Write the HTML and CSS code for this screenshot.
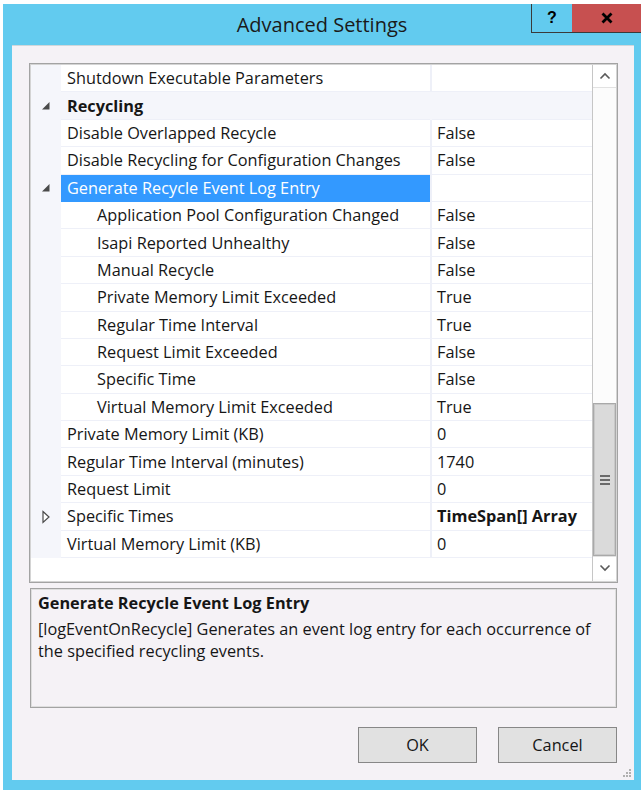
FILE: index.html
```html
<!DOCTYPE html>
<html>
<head>
<meta charset="utf-8">
<title>Advanced Settings</title>
<link rel="stylesheet" href="styles.css">
</head>
<body>
<div class="window">
  <div class="titlebar">
    <div></div>
    <div class="title">Advanced Settings</div>
    <div class="caption">
      <div class="cbtn help">?</div>
      <div class="cbtn close"><svg width="12" height="12" viewBox="0 0 12 12"><path d="M1.5 1.5 L10.5 10.5 M10.5 1.5 L1.5 10.5" stroke="#000" stroke-width="2.8" fill="none"/></svg></div>
    </div>
  </div>
  <div class="client">
    <div class="grid">
      <div class="rows">
        <div class="row"><div class="gut"></div><div class="name">Shutdown Executable Parameters</div><div class="sep"></div><div class="val"></div></div>
        <div class="row cat"><div class="gut"><svg width="10" height="10" viewBox="0 0 10 10"><polygon points="8.5,1 8.5,8.5 1,8.5" fill="#4a4a4a"/></svg></div><div class="name">Recycling</div><div class="sep"></div><div class="val"></div></div>
        <div class="row"><div class="gut"></div><div class="name">Disable Overlapped Recycle</div><div class="sep"></div><div class="val">False</div></div>
        <div class="row"><div class="gut"></div><div class="name">Disable Recycling for Configuration Changes</div><div class="sep"></div><div class="val">False</div></div>
        <div class="row sel"><div class="gut"><svg width="10" height="10" viewBox="0 0 10 10"><polygon points="8.5,1 8.5,8.5 1,8.5" fill="#4a4a4a"/></svg></div><div class="name">Generate Recycle Event Log Entry</div><div class="sep"></div><div class="val"></div></div>
        <div class="row sub"><div class="gut"></div><div class="name">Application Pool Configuration Changed</div><div class="sep"></div><div class="val">False</div></div>
        <div class="row sub"><div class="gut"></div><div class="name">Isapi Reported Unhealthy</div><div class="sep"></div><div class="val">False</div></div>
        <div class="row sub"><div class="gut"></div><div class="name">Manual Recycle</div><div class="sep"></div><div class="val">False</div></div>
        <div class="row sub"><div class="gut"></div><div class="name">Private Memory Limit Exceeded</div><div class="sep"></div><div class="val">True</div></div>
        <div class="row sub"><div class="gut"></div><div class="name">Regular Time Interval</div><div class="sep"></div><div class="val">True</div></div>
        <div class="row sub"><div class="gut"></div><div class="name">Request Limit Exceeded</div><div class="sep"></div><div class="val">False</div></div>
        <div class="row sub"><div class="gut"></div><div class="name">Specific Time</div><div class="sep"></div><div class="val">False</div></div>
        <div class="row sub"><div class="gut"></div><div class="name">Virtual Memory Limit Exceeded</div><div class="sep"></div><div class="val">True</div></div>
        <div class="row"><div class="gut"></div><div class="name">Private Memory Limit (KB)</div><div class="sep"></div><div class="val">0</div></div>
        <div class="row"><div class="gut"></div><div class="name">Regular Time Interval (minutes)</div><div class="sep"></div><div class="val">1740</div></div>
        <div class="row"><div class="gut"></div><div class="name">Request Limit</div><div class="sep"></div><div class="val">0</div></div>
        <div class="row"><div class="gut"><svg width="10" height="14" viewBox="0 0 10 14"><polygon points="2,1.5 8,7 2,12.5" fill="#fff" stroke="#4a4a4a" stroke-width="1.2"/></svg></div><div class="name">Specific Times</div><div class="sep"></div><div class="val bold">TimeSpan[] Array</div></div>
        <div class="row"><div class="gut"></div><div class="name">Virtual Memory Limit (KB)</div><div class="sep"></div><div class="val">0</div></div>
      </div>
      <div class="sbar">
        <div class="sbtn up"><svg width="12" height="8" viewBox="0 0 12 8"><polyline points="1.5,6.5 6,2 10.5,6.5" fill="none" stroke="#5a5a5a" stroke-width="1.6"/></svg></div>
        <div class="thumb"><div class="gripper"><span></span><span></span><span></span></div></div>
        <div class="sbtn down"><svg width="12" height="8" viewBox="0 0 12 8"><polyline points="1.5,1.5 6,6 10.5,1.5" fill="none" stroke="#5a5a5a" stroke-width="1.6"/></svg></div>
      </div>
    </div>
    <div class="desc">
      <div class="desc-title">Generate Recycle Event Log Entry</div>
      <div class="desc-text">[logEventOnRecycle] Generates an event log entry for each occurrence of the specified recycling events.</div>
    </div>
    <div class="buttons">
      <div class="btn">OK</div>
      <div class="btn">Cancel</div>
    </div>
    <svg class="grip" width="10" height="10" viewBox="0 0 10 10">
      <rect x="7" y="1" width="2" height="2" fill="#b0b0b0"/>
      <rect x="4" y="4" width="2" height="2" fill="#b0b0b0"/>
      <rect x="7" y="4" width="2" height="2" fill="#b0b0b0"/>
      <rect x="1" y="7" width="2" height="2" fill="#b0b0b0"/>
      <rect x="4" y="7" width="2" height="2" fill="#b0b0b0"/>
      <rect x="7" y="7" width="2" height="2" fill="#b0b0b0"/>
    </svg>
  </div>
</div>
</body>
</html>
```
FILE: styles.css
```css
* { box-sizing: border-box; }
html, body { margin: 0; padding: 0; background: #ffffff; }
body {
  font-family: "Open Sans", "Noto Sans", sans-serif;
  font-size: 16.3px;
  color: #161616;
}
.window {
  margin: 4px 2px 3px 3px;
  width: 638px;
  height: 786px;
  background: #62cbef;
  display: flex;
  flex-direction: column;
  padding-bottom: 10px;
}
.titlebar {
  height: 41px;
  flex: none;
  display: grid;
  grid-template-columns: 1fr auto 1fr;
}
.title {
  align-self: center;
  font-size: 20px;
  line-height: 28px;
  color: #1a1a1a;
}
.caption {
  justify-self: end;
  align-self: start;
  display: flex;
  height: 29px;
  border-left: 1px solid #3a3a3a;
  border-bottom: 1px solid #3a3a3a;
}
.cbtn {
  display: flex;
  align-items: center;
  justify-content: center;
}
.help {
  width: 40px;
  font-family: "Liberation Sans", sans-serif;
  font-weight: bold;
  font-size: 16px;
  color: #000;
}
.close {
  width: 69px;
  background: #c75050;
}
.client {
  flex: 1;
  margin: 0 7px 0 9px;
  background: #f5f2f6;
  border-top: 1px solid #cfd7db;
  padding: 17px 16px 17px 17px;
  display: flex;
  flex-direction: column;
  position: relative;
}
.grid {
  flex: none;
  height: 520px;
  border: 1px solid #a3a3a3;
  box-shadow: inset 0 0 0 1px #d4d4d4;
  padding: 1px;
  display: flex;
  background: #ffffff;
}
.rows {
  flex: 1;
  display: flex;
  flex-direction: column;
}
.row {
  display: grid;
  grid-template-columns: 30px 369px 2px 1fr;
  height: 27.4px;
  flex: none;
}
.gut {
  background: #f5f6fb;
  display: flex;
  align-items: center;
  justify-content: center;
}
.name, .val {
  display: flex;
  align-items: center;
  white-space: nowrap;
  border-bottom: 1px solid #eef0f8;
  padding-left: 6px;
}
.val { padding-left: 5px; }
.sep { background: #eef0f8; }
.bold { font-weight: bold; }
.cat > div { background: #f5f6fb; }
.cat .name { font-weight: bold; }
.sel .name { background: #3399ff; color: #ffffff; border-bottom-color: #3399ff; }
.sub .name { padding-left: 36px; }
.sbar {
  width: 24px;
  flex: none;
  border-left: 1px solid #c6c6c6;
  background: #fcfcfc;
  display: flex;
  flex-direction: column;
  padding-bottom: 2px;
}
.sbtn {
  height: 23px;
  flex: none;
  display: flex;
  align-items: center;
  justify-content: center;
  background: #ffffff;
}
.sbtn.up { border-bottom: 1px solid #e2e2e2; }
.sbtn.down { border-top: 1px solid #e2e2e2; }
.thumb {
  margin-top: auto;
  height: 153px;
  flex: none;
  background: #dadada;
  border: 1px solid #a9a9a9;
  box-shadow: inset 0 0 0 1px #c8c8c8;
  display: flex;
  align-items: center;
  justify-content: center;
}
.gripper {
  display: flex;
  flex-direction: column;
  gap: 2px;
}
.gripper span {
  display: block;
  width: 10px;
  height: 2px;
  background: #6a6a6a;
}
.desc {
  flex: none;
  margin: 5px 1px 0 1px;
  height: 120px;
  border: 1px solid #a3a3a3;
  box-shadow: inset 0 0 0 1px #dedede;
  padding: 3px 8px 0 7px;
}
.desc-title {
  font-weight: bold;
  line-height: 22px;
}
.desc-text {
  margin-top: 5px;
  line-height: 21.5px;
}
.buttons {
  flex: none;
  margin-top: 19px;
  display: flex;
  justify-content: flex-end;
  gap: 21px;
  padding-right: 1px;
}
.btn {
  width: 119px;
  height: 36px;
  background: #e1e1e1;
  border: 1px solid #878787;
  display: flex;
  align-items: center;
  justify-content: center;
}
.grip {
  position: absolute;
  right: 2px;
  bottom: 2px;
}
```
